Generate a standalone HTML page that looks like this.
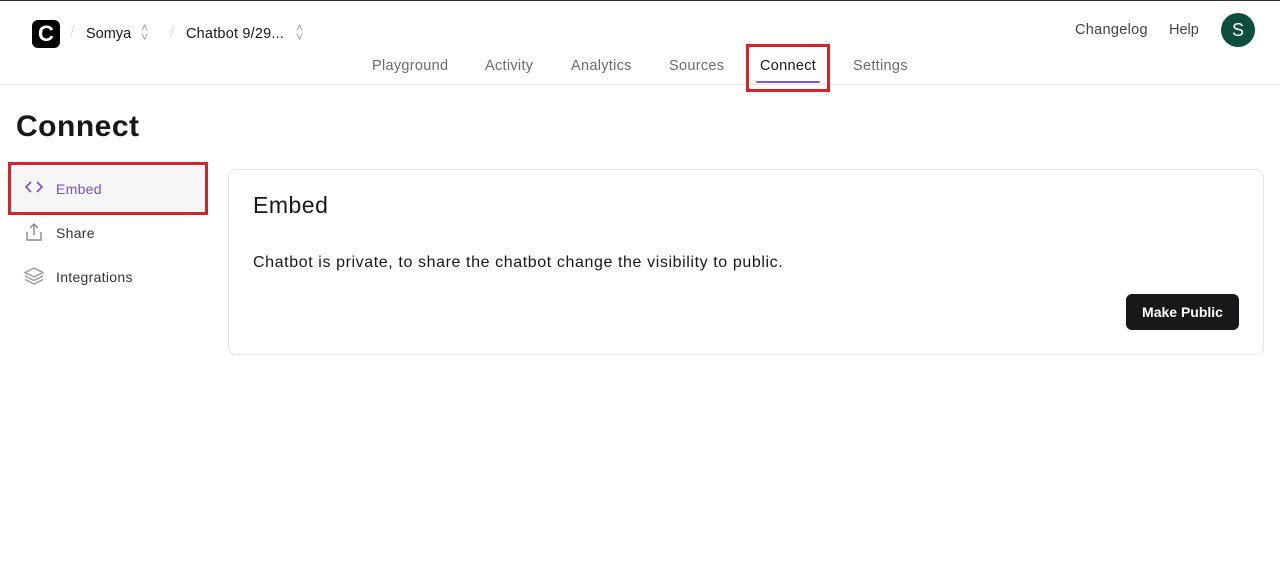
<!DOCTYPE html>
<html><head><style>
*{box-sizing:border-box;margin:0;padding:0}
body{width:1280px;height:576px;background:#fff;font-family:"Liberation Sans",sans-serif;position:relative;overflow:hidden;color:#18181b}
.a{position:absolute;white-space:nowrap}
.nav{font-size:14.5px;color:#6b6b70;top:58px;letter-spacing:0.3px}
</style></head><body>
<div class="a" style="left:0;top:0;width:1280px;height:1px;background:#333"></div>
<div class="a" style="left:32px;top:20px;width:28px;height:28px;background:#000;border-radius:6px;color:#fff;font-weight:bold;font-size:22px;text-align:center;line-height:28px">C</div>
<div class="a" style="left:70px;top:24px;color:#ddd;font-size:16px">/</div>
<div class="a" style="left:86px;top:26px;font-size:14.5px">Somya</div>
<div class="a" style="left:141px;top:24px;color:#999;font-size:12px;line-height:9px">˄<br>˅</div>
<div class="a" style="left:170px;top:24px;color:#ddd;font-size:16px">/</div>
<div class="a" style="left:186px;top:26px;font-size:14.5px;letter-spacing:0.2px">Chatbot 9/29...</div>
<div class="a" style="left:296px;top:24px;color:#999;font-size:12px;line-height:9px">˄<br>˅</div>
<div class="a nav" style="left:372px">Playground</div>
<div class="a nav" style="left:485px">Activity</div>
<div class="a nav" style="left:571px">Analytics</div>
<div class="a nav" style="left:669px">Sources</div>
<div class="a nav" style="left:760px;color:#18181b">Connect</div>
<div class="a" style="left:756px;top:81px;width:64px;height:2px;background:#7c5cd6;border-radius:1px"></div>
<div class="a nav" style="left:853px">Settings</div>
<div class="a" style="left:1075px;top:22px;font-size:14.5px;color:#444;letter-spacing:0.3px">Changelog</div>
<div class="a" style="left:1169px;top:22px;font-size:14.5px;color:#444">Help</div>
<div class="a" style="left:1221px;top:13px;width:34px;height:34px;border-radius:50%;background:#0d4f3c;color:#fff;text-align:center;line-height:34px;font-size:18px">S</div>
<div class="a" style="left:0;top:84px;width:1280px;height:1px;background:#e5e5e5"></div>
<div class="a" style="left:746px;top:44px;width:84px;height:48px;border:3px solid #d9212c"></div>
<div class="a" style="left:16px;top:110px;font-size:30px;font-weight:bold;letter-spacing:0.5px">Connect</div>
<div class="a" style="left:12px;top:166px;width:192px;height:44px;background:#f6f6f7;border-radius:6px"></div>
<div class="a" style="left:8px;top:162px;width:200px;height:53px;border:3px solid #d9212c"></div>
<svg class="a" style="left:24px;top:179px" width="20" height="16" viewBox="0 0 20 16" fill="none" stroke="#7a4fc9" stroke-width="1.6"><path d="M7 3L2 8l5 5M13 3l5 5-5 5"/></svg>
<div class="a" style="left:56px;top:181px;font-size:14px;color:#7a4fc9;letter-spacing:0.3px">Embed</div>
<svg class="a" style="left:24px;top:222px" width="20" height="20" viewBox="0 0 20 20" fill="none" stroke="#888" stroke-width="1.4"><path d="M10 2v11M6 6l4-4 4 4M3 10v8h14v-8"/></svg>
<div class="a" style="left:56px;top:225px;font-size:14px;color:#333;letter-spacing:0.3px">Share</div>
<svg class="a" style="left:23px;top:266px" width="22" height="20" viewBox="0 0 22 20" fill="none" stroke="#999" stroke-width="1.4"><path d="M11 2l9 4.5-9 4.5-9-4.5z M2 10l9 4.5 9-4.5 M2 13.5l9 4.5 9-4.5"/></svg>
<div class="a" style="left:56px;top:269px;font-size:14px;color:#333;letter-spacing:0.3px">Integrations</div>
<div class="a" style="left:228px;top:169px;width:1036px;height:186px;border:1px solid #e5e5e5;border-radius:8px"></div>
<div class="a" style="left:253px;top:192px;font-size:23px;letter-spacing:0.5px">Embed</div>
<div class="a" style="left:253px;top:254px;font-size:16px;letter-spacing:0.6px">Chatbot is private, to share the chatbot change the visibility to public.</div>
<div class="a" style="left:1126px;top:294px;width:113px;height:36px;background:#18181b;border-radius:6px;color:#fff;font-size:14px;font-weight:bold;text-align:center;line-height:36px">Make Public</div>
</body></html>
